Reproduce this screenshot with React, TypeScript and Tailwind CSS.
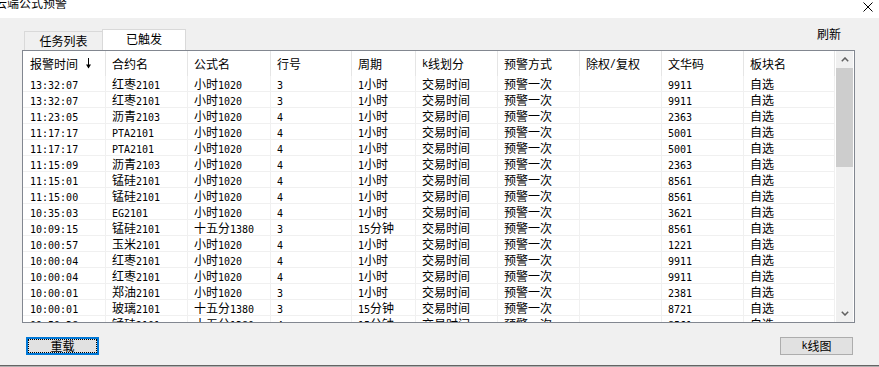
import React from 'react';

const CJK = "font-['Noto_Sans_CJK_SC',sans-serif]";

function Txt({ t }: { t: string }) {
  const parts = t.split(/([\x21-\x7e]+)/).filter((p) => p.length > 0);
  return (
    <>
      {parts.map((p, i) =>
        /^[\x21-\x7e]+$/.test(p) ? (
          <span key={i} className="font-['DejaVu_Sans_Mono',monospace] text-[10px]">
            {p}
          </span>
        ) : (
          <span key={i} className="font-['Noto_Sans_CJK_SC',sans-serif] text-[12px]">
            {p}
          </span>
        )
      )}
    </>
  );
}

const widths = [83, 82, 83, 81, 64, 82, 82, 82, 82, 91];
const headers = ['报警时间', '合约名', '公式名', '行号', '周期', 'k线划分', '预警方式', '除权/复权', '文华码', '板块名'];

const rows: string[][] = [
  ['13:32:07', '红枣2101', '小时1020', '3', '1小时', '交易时间', '预警一次', '', '9911', '自选'],
  ['13:32:07', '红枣2101', '小时1020', '3', '1小时', '交易时间', '预警一次', '', '9911', '自选'],
  ['11:23:05', '沥青2103', '小时1020', '4', '1小时', '交易时间', '预警一次', '', '2363', '自选'],
  ['11:17:17', 'PTA2101', '小时1020', '4', '1小时', '交易时间', '预警一次', '', '5001', '自选'],
  ['11:17:17', 'PTA2101', '小时1020', '4', '1小时', '交易时间', '预警一次', '', '5001', '自选'],
  ['11:15:09', '沥青2103', '小时1020', '4', '1小时', '交易时间', '预警一次', '', '2363', '自选'],
  ['11:15:01', '锰硅2101', '小时1020', '4', '1小时', '交易时间', '预警一次', '', '8561', '自选'],
  ['11:15:00', '锰硅2101', '小时1020', '4', '1小时', '交易时间', '预警一次', '', '8561', '自选'],
  ['10:35:03', 'EG2101', '小时1020', '4', '1小时', '交易时间', '预警一次', '', '3621', '自选'],
  ['10:09:15', '锰硅2101', '十五分1380', '3', '15分钟', '交易时间', '预警一次', '', '8561', '自选'],
  ['10:00:57', '玉米2101', '小时1020', '4', '1小时', '交易时间', '预警一次', '', '1221', '自选'],
  ['10:00:04', '红枣2101', '小时1020', '4', '1小时', '交易时间', '预警一次', '', '9911', '自选'],
  ['10:00:04', '红枣2101', '小时1020', '4', '1小时', '交易时间', '预警一次', '', '9911', '自选'],
  ['10:00:01', '郑油2101', '小时1020', '3', '1小时', '交易时间', '预警一次', '', '2381', '自选'],
  ['10:00:01', '玻璃2101', '十五分1380', '3', '15分钟', '交易时间', '预警一次', '', '8721', '自选'],
  ['09:59:38', '锰硅2101', '十五分1380', '4', '15分钟', '交易时间', '预警一次', '', '8561', '自选'],
];

function SortArrow() {
  return (
    <svg width="5" height="11" viewBox="0 0 5 11" className="ml-[8px]">
      <line x1="2.5" y1="0" x2="2.5" y2="10" stroke="#000" strokeWidth="1" />
      <path d="M0 6.5 L2.5 10.5 L5 6.5 Z" fill="#000" />
    </svg>
  );
}

export default function App() {
  return (
    <div className={`w-[879px] h-[367px] bg-[#f0f0f0] flex flex-col overflow-hidden text-black ${CJK}`}>
      {/* title bar */}
      <div className="h-[18px] bg-white flex justify-between overflow-hidden">
        <div className="-ml-[5px] -mt-[5px] text-[12px] leading-[16px] whitespace-nowrap">云端公式预警</div>
        <svg width="10" height="10" viewBox="0 0 10 10" className="mt-[2px] mr-[6px]">
          <path d="M0.5 0.5 L9.5 9.5 M9.5 0.5 L0.5 9.5" stroke="#000" strokeWidth="1" />
        </svg>
      </div>

      {/* tabs row */}
      <div className="h-[32px] flex items-end pl-[24px] pr-[38px]">
        <div className="h-[19px] w-[79px] border border-b-0 border-[#d9d9d9] flex justify-center pt-[1px] text-[12px] leading-[16px]">
          任务列表
        </div>
        <div className="-ml-px h-[21px] w-[84px] border border-b-0 border-[#d9d9d9] bg-white flex justify-center pt-[1px] text-[12px] leading-[16px]">
          已触发
        </div>
        <div className="ml-auto self-start mt-[8px] text-[12px] leading-[16px]">刷新</div>
      </div>

      {/* grid */}
      <div className="ml-[22px] w-[833px] h-[273px] border border-[#828790] bg-white flex overflow-hidden">
        <div className="w-[812px] flex flex-col overflow-hidden">
          <div className="h-[25px] flex shrink-0">
            {headers.map((h, i) => (
              <div
                key={i}
                style={{ width: widths[i] }}
                className={`h-[25px] shrink-0 flex items-center border-r border-[#e5e5e5] text-[12px] leading-[16px] whitespace-nowrap ${i === 0 ? 'pl-[7px]' : 'pl-[6px]'}`}
              >
                <Txt t={h} />
                {i === 0 && <SortArrow />}
              </div>
            ))}
          </div>
          {rows.map((r, ri) => (
            <div key={ri} className="h-[16px] flex shrink-0">
              {r.map((c, ci) => (
                <div
                  key={ci}
                  style={{ width: widths[ci] }}
                  className={`h-[16px] shrink-0 border-r border-b border-[#f0f0f0] leading-[16px] text-[12px] whitespace-nowrap overflow-hidden ${ci === 0 ? 'pl-[7px]' : 'pl-[6px]'}`}
                >
                  <Txt t={c} />
                </div>
              ))}
            </div>
          ))}
        </div>
        {/* scrollbar */}
        <div className="flex-1 px-px">
          <div className="w-[17px] h-full bg-[#f0f0f0] flex flex-col">
            <div className="h-[17px] flex items-center justify-center shrink-0">
              <svg width="8" height="5" viewBox="0 0 8 5">
                <path d="M0.8 4.3 L4 1 L7.2 4.3" stroke="#606060" strokeWidth="1.5" fill="none" />
              </svg>
            </div>
            <div className="h-[99px] bg-[#cdcdcd] shrink-0" />
            <div className="flex-1" />
            <div className="h-[17px] flex items-center justify-center shrink-0">
              <svg width="8" height="5" viewBox="0 0 8 5">
                <path d="M0.8 0.7 L4 4 L7.2 0.7" stroke="#606060" strokeWidth="1.5" fill="none" />
              </svg>
            </div>
          </div>
        </div>
      </div>

      {/* buttons */}
      <div className="mt-[14px] h-[18px] flex">
        <div className="ml-[26px] w-[73px] h-[18px] border-2 border-[#0078d7] bg-[#e1e1e1]">
          <div className="w-full h-full border border-dotted border-black flex items-center justify-center text-[12px] leading-[14px]">
            重载
          </div>
        </div>
        <div className="ml-auto mr-[26px] w-[73px] h-[18px] border border-[#adadad] bg-[#e1e1e1] flex items-center justify-center text-[12px] leading-[14px]">
          <Txt t="k线图" />
        </div>
      </div>

      <div className="mt-[10px] h-px bg-[#646464]" />
      <div className="h-px bg-[#b0b0b0]" />
    </div>
  );
}
